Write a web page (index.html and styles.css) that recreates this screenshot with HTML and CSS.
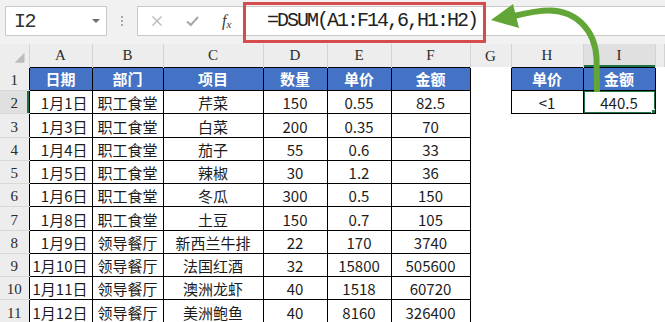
FILE: index.html
```html
<!DOCTYPE html>
<html>

<head>
    <meta charset='UTF-8'>
    <meta name='viewport' content='width=device-width, initial-scale=1.0'>
    <title>DSUM</title>
    <link rel="stylesheet" href="styles.css">
</head>

<body>
    <!-- 编辑栏 -->
    <div class="formula-bar">
        <div class="name-box">
            <span class="name-text">I2</span>
            <span class="name-caret"></span>
        </div>
        <div class="bar-grip"><i></i><i></i><i></i></div>
        <div class="bar-input">
            <div class="bar-buttons">
                <svg class="btn-cancel" width="12" height="12" viewBox="0 0 12 12">
                    <path d="M1.5 1.5L10.5 10.5M10.5 1.5L1.5 10.5" />
                </svg>
                <svg class="btn-enter" width="13" height="12" viewBox="0 0 13 12">
                    <path d="M1 6.5L4.8 10L12 2" />
                </svg>
                <span class="btn-fx">f<sub>x</sub></span>
            </div>
            <div class="formula-text">=DSUM(A1:F14,6,H1:H2)</div>
        </div>
    </div>

    <!-- 指示箭头 -->
    <svg class="callout-arrow" width="185" height="100" viewBox="0 0 185 100">
        <path d="M117 92 L116.5 58 C115 30 96 11 70 10.5 C58 10.5 48 12.5 34 16" />
        <polygon points="11,20 33,4 39,28" />
    </svg>

    <table class="sheet">
        <colgroup>
            <col style="width:29px">
            <col style="width:63px">
            <col style="width:71px">
            <col style="width:100px">
            <col style="width:64px">
            <col style="width:64px">
            <col style="width:79px">
            <col style="width:41px">
            <col style="width:72px">
            <col style="width:72px">
            <col>
        </colgroup>
        <tr class="col-head">
            <th class="corner"><span></span></th>
            <th>A</th><th>B</th><th>C</th><th>D</th><th>E</th><th>F</th><th>G</th><th>H</th><th class="active">I</th><th></th>
        </tr>
        <tr>
            <th class="row-head">1</th>
            <td class="cell hd">日期</td><td class="cell hd">部门</td><td class="cell hd">项目</td>
            <td class="cell hd">数量</td><td class="cell hd">单价</td><td class="cell hd">金额</td>
            <td></td>
            <td class="cell hd">单价</td><td class="cell hd">金额</td><td></td>
        </tr>
        <tr>
            <th class="row-head active">2</th>
            <td class="cell date">1月1日</td><td class="cell">职工食堂</td><td class="cell">芹菜</td>
            <td class="cell">150</td><td class="cell">0.55</td><td class="cell">82.5</td>
            <td></td>
            <td class="cell">&lt;1</td><td class="cell sel">440.5</td><td></td>
        </tr>
        <tr>
            <th class="row-head">3</th>
            <td class="cell date">1月3日</td><td class="cell">职工食堂</td><td class="cell">白菜</td>
            <td class="cell">200</td><td class="cell">0.35</td><td class="cell">70</td>
            <td></td><td></td><td></td><td></td>
        </tr>
        <tr>
            <th class="row-head">4</th>
            <td class="cell date">1月4日</td><td class="cell">职工食堂</td><td class="cell">茄子</td>
            <td class="cell">55</td><td class="cell">0.6</td><td class="cell">33</td>
            <td></td><td></td><td></td><td></td>
        </tr>
        <tr>
            <th class="row-head">5</th>
            <td class="cell date">1月5日</td><td class="cell">职工食堂</td><td class="cell">辣椒</td>
            <td class="cell">30</td><td class="cell">1.2</td><td class="cell">36</td>
            <td></td><td></td><td></td><td></td>
        </tr>
        <tr>
            <th class="row-head">6</th>
            <td class="cell date">1月6日</td><td class="cell">职工食堂</td><td class="cell">冬瓜</td>
            <td class="cell">300</td><td class="cell">0.5</td><td class="cell">150</td>
            <td></td><td></td><td></td><td></td>
        </tr>
        <tr>
            <th class="row-head">7</th>
            <td class="cell date">1月8日</td><td class="cell">职工食堂</td><td class="cell">土豆</td>
            <td class="cell">150</td><td class="cell">0.7</td><td class="cell">105</td>
            <td></td><td></td><td></td><td></td>
        </tr>
        <tr>
            <th class="row-head">8</th>
            <td class="cell date">1月9日</td><td class="cell">领导餐厅</td><td class="cell">新西兰牛排</td>
            <td class="cell">22</td><td class="cell">170</td><td class="cell">3740</td>
            <td></td><td></td><td></td><td></td>
        </tr>
        <tr>
            <th class="row-head">9</th>
            <td class="cell date">1月10日</td><td class="cell">领导餐厅</td><td class="cell">法国红酒</td>
            <td class="cell">32</td><td class="cell">15800</td><td class="cell">505600</td>
            <td></td><td></td><td></td><td></td>
        </tr>
        <tr>
            <th class="row-head">10</th>
            <td class="cell date">1月11日</td><td class="cell">领导餐厅</td><td class="cell">澳洲龙虾</td>
            <td class="cell">40</td><td class="cell">1518</td><td class="cell">60720</td>
            <td></td><td></td><td></td><td></td>
        </tr>
        <tr>
            <th class="row-head">11</th>
            <td class="cell date">1月12日</td><td class="cell">领导餐厅</td><td class="cell">美洲鲍鱼</td>
            <td class="cell">40</td><td class="cell">8160</td><td class="cell">326400</td>
            <td></td><td></td><td></td><td></td>
        </tr>
        <!-- 第12行只露出一点 -->
        <tr class="row-tail">
            <th class="row-head"></th>
            <td class="cell"></td><td class="cell"></td><td class="cell"></td>
            <td class="cell"></td><td class="cell"></td><td class="cell"></td>
            <td></td><td></td><td></td><td></td>
        </tr>
    </table>
</body>

</html>
```

FILE: styles.css
```css
body {
    margin: 0;
    width: 665px;
    height: 322px;
    overflow: hidden;
    position: relative;
    background-color: #fff;
    font-family: "Noto Sans CJK SC", sans-serif;
    color: #1c1c1c;
}

/* 编辑栏 */
.formula-bar {
    display: flex;
    align-items: flex-start;
    height: 44px;
    padding: 6px 0 0 5px;
    box-sizing: border-box;
    background-color: #f1f1f1;
}

.name-box {
    display: flex;
    align-items: center;
    justify-content: space-between;
    width: 102px;
    height: 30px;
    box-sizing: border-box;
    padding: 0 6px 0 8px;
    border: 1px solid #c9c9c9;
    background-color: #fff;
}

.name-text {
    font-family: "Liberation Mono", monospace;
    font-size: 20px;
    letter-spacing: -1.5px;
    color: #333;
}

/* 下拉小三角 */
.name-caret {
    width: 0;
    height: 0;
    border-left: 4px solid transparent;
    border-right: 4px solid transparent;
    border-top: 4px solid #6f6f6f;
}

.bar-grip {
    width: 30px;
    height: 30px;
    display: flex;
    flex-direction: column;
    align-items: center;
    justify-content: center;
    gap: 2px;
}

.bar-grip i {
    width: 2px;
    height: 2px;
    background-color: #a9a9a9;
}

.bar-input {
    flex: 1;
    display: flex;
    height: 30px;
    box-sizing: border-box;
    border: 1px solid #c9c9c9;
    border-right: none;
    background-color: #fff;
}

.bar-buttons {
    width: 105px;
    display: flex;
    align-items: center;
    gap: 23px;
    padding-left: 13px;
    box-sizing: border-box;
}

.btn-cancel path {
    stroke: #b9b9b9;
    stroke-width: 1.4;
    fill: none;
}

.btn-enter path {
    stroke: #a7a7a7;
    stroke-width: 2;
    fill: none;
}

.btn-fx {
    font-family: "Liberation Serif", serif;
    font-style: italic;
    font-size: 16px;
    color: #3a3a3a;
    line-height: 1;
}

.btn-fx sub {
    font-size: 11px;
    vertical-align: -2px;
}

/* 公式 + 红框 */
.formula-text {
    position: relative;
    width: 243px;
    box-sizing: border-box;
    padding-left: 24px;
    line-height: 28px;
    font-family: "Liberation Mono", monospace;
    font-size: 20px;
    letter-spacing: -2px;
    color: #222;
}

.formula-text::before {
    content: "";
    position: absolute;
    left: 0;
    right: 0;
    top: -5px;
    bottom: -8px;
    border: 3px solid #d44c4c;
}

/* 绿色箭头 */
.callout-arrow {
    position: absolute;
    left: 480px;
    top: 0;
    z-index: 2;
}

.callout-arrow path {
    fill: none;
    stroke: #61a637;
    stroke-width: 6;
}

.callout-arrow polygon {
    fill: #61a637;
}

/* 表格 */
.sheet {
    width: 665px;
    table-layout: fixed;
    border-collapse: collapse;
    border-spacing: 0;
}

.sheet th,
.sheet td {
    padding: 0;
    overflow: hidden;
    white-space: nowrap;
}

.col-head th {
    height: 20px;
    background-color: #ededed;
    border-right: 1px solid #d3d3d3;
    font-family: "Liberation Serif", serif;
    font-weight: normal;
    font-size: 15px;
    line-height: 20px;
    color: #2b2b2b;
}

.col-head th.active {
    background-color: #e0e0e0;
    box-shadow: inset 0 -2px 0 #217346;
}

.corner span {
    display: block;
    width: 10px;
    height: 10px;
    margin: 4px 4px 0 auto;
    background-color: #bcbcbc;
    clip-path: polygon(100% 0, 100% 100%, 0 100%);
}

.sheet tr {
    height: 23.27px;
}

.sheet tr.row-tail {
    height: 3px;
}

.row-head {
    background-color: #ededed;
    border-bottom: 1px solid #d8d8d8;
    font-family: "Liberation Serif", serif;
    font-weight: normal;
    font-size: 15px;
    color: #2b2b2b;
    vertical-align: bottom;
    line-height: 20px;
}

.row-tail .row-head,
.row-tail .cell {
    line-height: 0;
}

.row-head.active {
    background-color: #e0e0e0;
    box-shadow: inset -2px 0 0 #217346;
}

.cell {
    border: 1px solid #000;
    text-align: center;
    vertical-align: bottom;
    font-size: 15px;
    line-height: 21px;
}

.cell.date {
    text-align: right;
    padding-right: 4px;
}

/* 蓝色表头 */
.cell.hd {
    background-color: #4472c4;
    color: #fff;
    font-weight: bold;
    vertical-align: middle;
}

/* 选中单元格 */
.cell.sel {
    position: relative;
}

.cell.sel::after {
    content: "";
    position: absolute;
    left: -1px;
    top: -1px;
    right: -1px;
    bottom: -1px;
    border: 2px solid #217346;
}

.cell.sel::before {
    content: "";
    position: absolute;
    right: -3px;
    bottom: -3px;
    width: 5px;
    height: 5px;
    background-color: #217346;
    border: 1px solid #fff;
    z-index: 1;
}
```
